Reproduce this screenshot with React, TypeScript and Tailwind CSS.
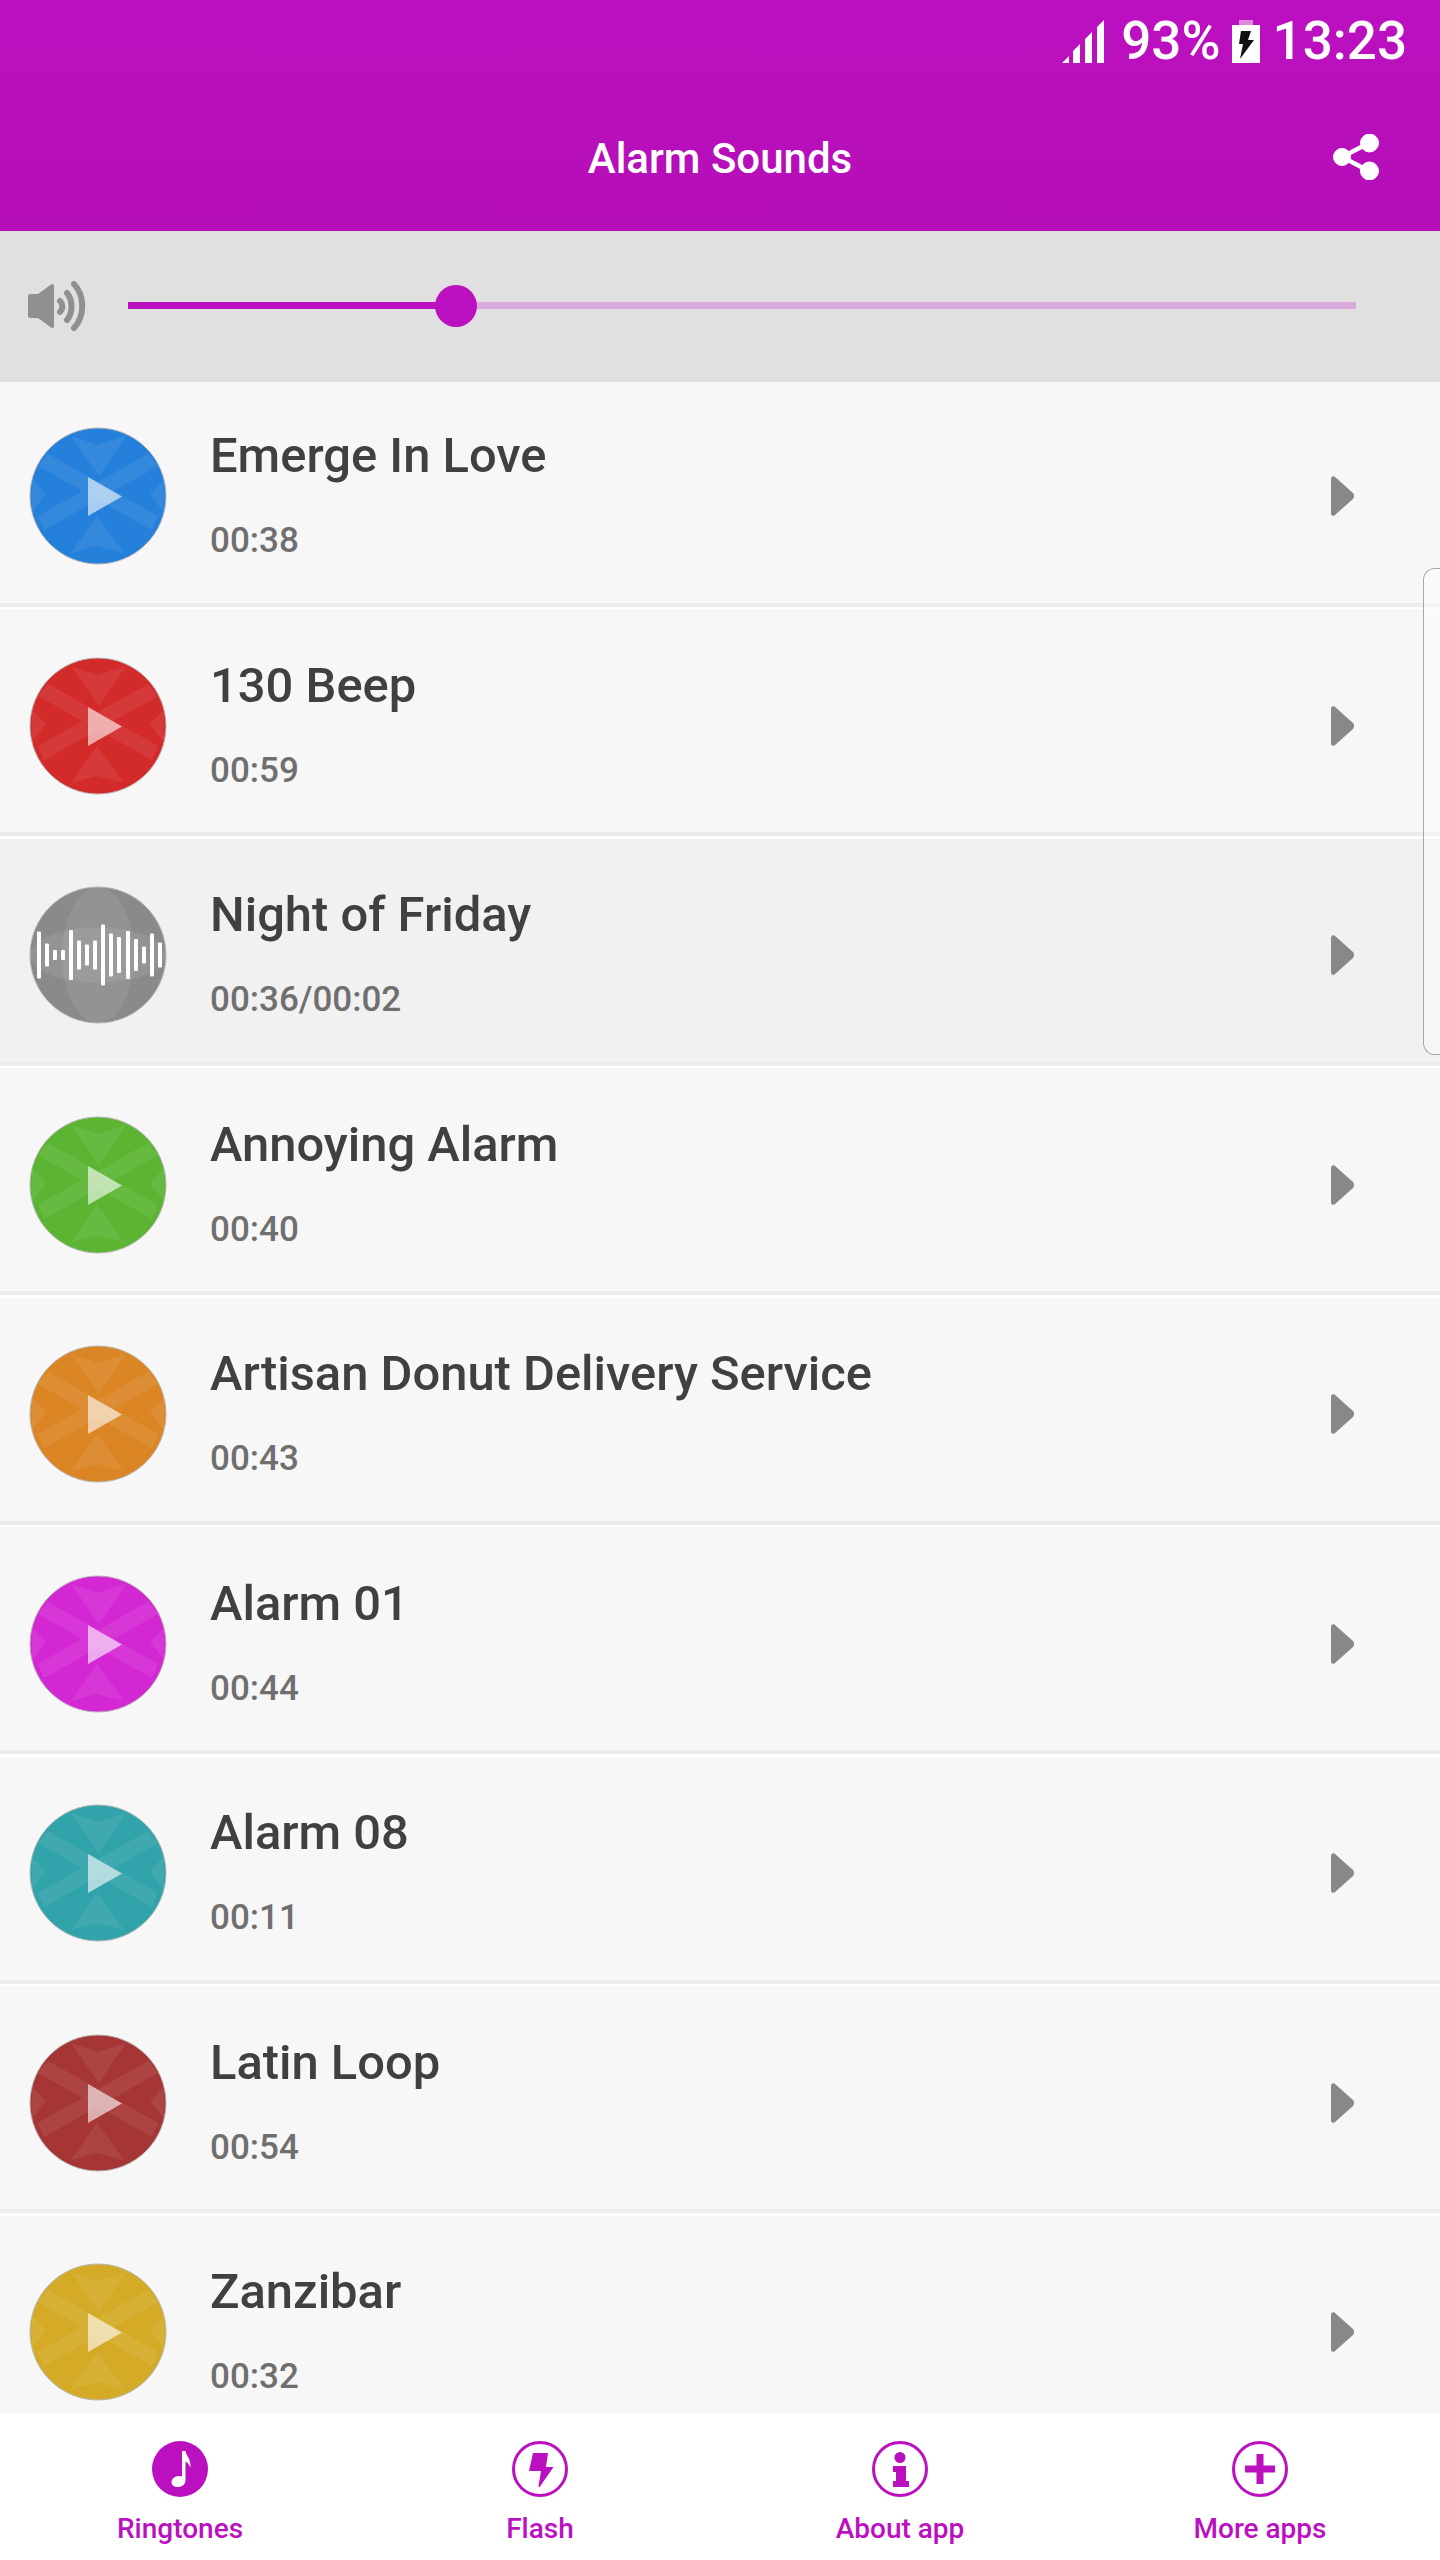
import React from 'react';

const ringtones = [
  { name: 'Emerge In Love', time: '00:38', color: '#2580da' },
  { name: '130 Beep', time: '00:59', color: '#d32a2b' },
  { name: 'Night of Friday', time: '00:36/00:02', color: '#8a8a8a', playing: true },
  { name: 'Annoying Alarm', time: '00:40', color: '#5cb533' },
  { name: 'Artisan Donut Delivery Service', time: '00:43', color: '#db8626' },
  { name: 'Alarm 01', time: '00:44', color: '#d428d4' },
  { name: 'Alarm 08', time: '00:11', color: '#32a3ab' },
  { name: 'Latin Loop', time: '00:54', color: '#a63636' },
  { name: 'Zanzibar', time: '00:32', color: '#d4ab27' },
];

// x centre and full height of each bar, read off the playing disc
const waveBars = [
  [9, 47], [17, 23], [25, 10], [33, 10], [41, 50], [49, 29], [57, 21], [65, 29],
  [73, 61], [81, 43], [89, 36], [98, 48], [106, 32], [114, 17], [122, 43], [130, 25],
];

const Disc = ({ color, playing }: { color: string; playing?: boolean }) => (
  <svg viewBox="0 0 136 136" className="w-[136px] h-[136px] shrink-0 overflow-visible">
    <defs>
      <clipPath id="disc-clip">
        <circle cx="68" cy="68" r="68" />
      </clipPath>
    </defs>
    <circle cx="68" cy="68" r="68" fill={color} stroke="#b8b8b8" strokeWidth="1" />
    {playing ? (
      <g clipPath="url(#disc-clip)" fill="#fff">
        <ellipse cx="68" cy="68" rx="68" ry="28" opacity="0.08" />
        <ellipse cx="68" cy="68" rx="36" ry="68" opacity="0.08" />
        {waveBars.map(([x, h]) => (
          <rect key={x} x={x - 2} y={68 - h / 2} width="4" height={h} rx="1" fill="#fff" />
        ))}
      </g>
    ) : (
      <g clipPath="url(#disc-clip)" fill="#fff" opacity="0.07">
        <polygon points="41,8 67,17 96,8 69,48" />
        <polygon points="41,125 67,88 94,125 67,118" />
        <polygon points="8,38 18,26 128,88 122,102" />
        <polygon points="128,38 118,26 8,88 14,102" />
        <polygon points="2,52 16,66 2,84" />
        <polygon points="134,52 120,66 134,84" />
      </g>
    )}
    {!playing && <polygon points="58,49 58,88 92,68.500" fill="#fff" opacity="0.6" />}
  </svg>
);

const Row = ({ item, first }: { item: (typeof ringtones)[number]; first: boolean }) => (
  <div className={`shrink-0 flex flex-col ${first ? 'h-[227px]' : 'h-[229.5px]'}`}>
    <div
      className={`flex-1 min-h-0 flex items-center pl-[30px] pr-[86px] ${first ? 'pt-[7px]' : 'pt-[10px]'} ${
        item.playing ? 'bg-[#f1f1f1]' : 'bg-[#f7f7f7]'
      }`}
    >
      <Disc color={item.color} playing={item.playing} />
      <div className="flex-1 ml-[44px] pb-[3px] flex flex-col gap-[36px]">
        <div className="text-[48.9px] leading-[56px] font-medium text-[#404040]">{item.name}</div>
        <div className="text-[35px] leading-[41px] font-medium text-[#6f6f6f]">{item.time}</div>
      </div>
      <svg viewBox="0 0 23 40" className="w-[23px] h-[40px] text-[#888888]" fill="currentColor">
        <path d="M0 3C0 .6 1.800-.6 3.500.6l18.500 16.500c1.300 1.300 1.300 4.500 0 5.800L3.500 39.400C1.800 40.600 0 39.400 0 37z" />
      </svg>
    </div>
    <div className="h-[4px] bg-[#ececec]" />
    <div className="h-[2.5px] bg-white" />
  </div>
);

const NavItem = ({ label, icon }: { label: string; icon: React.ReactNode }) => (
  <div className="flex flex-col items-center pt-[28px]">
    {icon}
    <span className="mt-[15px] text-[28px] leading-[33px] font-medium text-[#bb10bf]">{label}</span>
  </div>
);

export default function App() {
  return (
    <div className="relative w-[1440px] h-[2560px] flex flex-col overflow-hidden bg-[#f7f7f7] font-['Roboto',sans-serif]">
      <header className="h-[231px] shrink-0 bg-gradient-to-b from-[#bc10c0] to-[#b40eb7] text-white">
        <div className="h-[80px] pt-[2px] flex items-center justify-end pr-[33px]">
          <svg viewBox="0 0 42 43" className="w-[42px] h-[43px]" fill="#fff">
            <path d="M0 43 7 36V43ZM11 43V31L18 24V43ZM23 43V19L30 12V43ZM35 43V7L42 0V43Z" />
          </svg>
          <span className="ml-[17px] text-[53px] leading-[62px] font-medium">93%</span>
          <svg viewBox="0 0 28 43" className="ml-[11px] w-[28px] h-[43px]">
            <path d="M7 0h14v5H7z" fill="#fff" opacity="0.5" />
            <path d="M0 5h28v38H0z" fill="#fff" />
            <path d="M9 11h10l-3 9h6L8 39l3-15H7z" fill="#111" />
          </svg>
          <span className="ml-[13px] text-[53px] leading-[62px] font-medium">13:23</span>
        </div>
        <div className="h-[80px] mt-[39px] grid grid-cols-[1fr_auto_1fr] items-center">
          <div />
          <div className="text-[42px] leading-[50px] font-medium">Alarm Sounds</div>
          <div className="flex justify-end pr-[61px] pb-[5px]">
            <svg viewBox="0 0 46 46" className="w-[46px] h-[46px]" fill="#fff" stroke="#fff">
              <circle cx="9" cy="23" r="8.5" />
              <circle cx="36.5" cy="9" r="9" />
              <circle cx="36.5" cy="37" r="9" />
              <path d="M9 23 36 9M9 23l27 14" strokeWidth="4.5" fill="none" />
            </svg>
          </div>
        </div>
      </header>

      <div className="h-[151px] shrink-0 bg-[#e0e0e0] flex items-center pl-[28px] pr-[84px] pb-[2px]">
        <svg viewBox="0 0 58 50" className="w-[58px] h-[50px] shrink-0" fill="#909090">
          <path d="M0 14c0-1 1-2 2-2h8L23 2.500c1.500-1 3-.2 3 1.500v40c0 1.700-1.500 2.500-3 1.500L10 36H2c-1 0-2-1-2-2z" transform="translate(0 1)" />
          <g fill="none" stroke="#909090" strokeWidth="6" strokeLinecap="round">
            <path d="M32 20c3 3 3 8 0 11" />
            <path d="M39 12c6 7 6 20 0 27" />
            <path d="M46 3c11 12 11 32 0 44" />
          </g>
        </svg>
        <div className="relative flex-1 ml-[42px] h-[7px] bg-[#d8a9da]">
          <div className="h-full w-[327px] bg-[#bb10bf]" />
          <div className="absolute left-[307px] top-[-17px] w-[42px] h-[42px] rounded-full bg-[#bb10bf]" />
        </div>
      </div>

      <main className="flex-1 min-h-0 overflow-hidden flex flex-col">
        {ringtones.map((item, i) => (
          <Row key={item.name} item={item} first={i === 0} />
        ))}
      </main>

      <nav className="h-[147px] shrink-0 bg-white grid grid-cols-4">
        <NavItem
          label="Ringtones"
          icon={
            <svg viewBox="0 0 56 56" className="w-[56px] h-[56px]">
              <circle cx="28" cy="28" r="28" fill="#bb10bf" />
              <path
                d="M30 10h3.500c.5 5 5.500 7 5 17-1.200-3.500-3-5.500-5-6.500V39c0 4.500-3.500 7-8 7-3.500 0-6-2-6-5s3.500-6 7.500-6c1.200 0 2.200.2 3 .6z"
                fill="#fff"
              />
            </svg>
          }
        />
        <NavItem
          label="Flash"
          icon={
            <svg viewBox="0 0 56 56" className="w-[56px] h-[56px]">
              <circle cx="28" cy="28" r="26.500" fill="none" stroke="#bb10bf" strokeWidth="3" />
              <path d="M21 12h15l-2 14h7.500L28 45.500c-.7 1-1.700.6-1.500-.5L29 30H17z" fill="#bb10bf" />
            </svg>
          }
        />
        <NavItem
          label="About app"
          icon={
            <svg viewBox="0 0 56 56" className="w-[56px] h-[56px]">
              <circle cx="28" cy="28" r="26.500" fill="none" stroke="#bb10bf" strokeWidth="3" />
              <circle cx="28" cy="16.500" r="5.500" fill="#bb10bf" />
              <path d="M21 25h13v15h3v6H21v-6h3v-9h-3z" fill="#bb10bf" />
            </svg>
          }
        />
        <NavItem
          label="More apps"
          icon={
            <svg viewBox="0 0 56 56" className="w-[56px] h-[56px]">
              <circle cx="28" cy="28" r="26.500" fill="none" stroke="#bb10bf" strokeWidth="3" />
              <path d="M24.500 13h7v11.500H43v7H31.500V43h-7V31.500H13v-7h11.500z" fill="#bb10bf" />
            </svg>
          }
        />
      </nav>

      {/* edge panel handle sitting over the list */}
      <div className="absolute left-[1423px] top-[568px] w-[17px] h-[487px] rounded-l-[12px] border border-r-0 border-[#a8a8a8] bg-white/40" />
    </div>
  );
}
